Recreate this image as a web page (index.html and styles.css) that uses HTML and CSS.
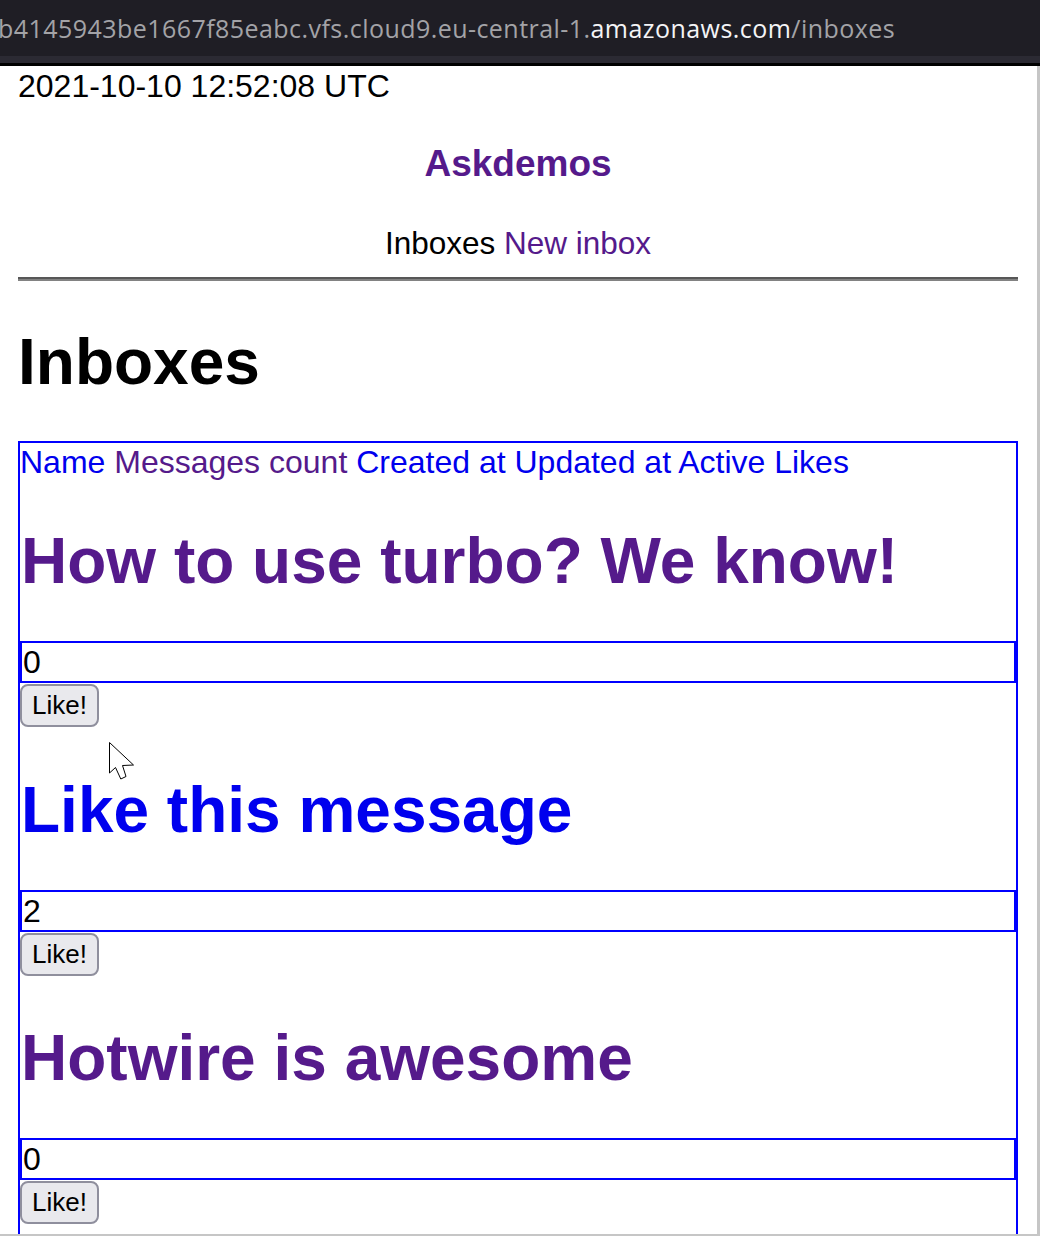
FILE: index.html
```html
<!DOCTYPE html>
<html lang="en">
<head>
<meta charset="utf-8">
<title>Inboxes</title>
<link rel="stylesheet" href="styles.css">
</head>
<body>
<header class="chrome">
  <div class="omnibox"><span class="url-dim">b4145943be1667f85eabc.vfs.cloud9.eu-central-1.</span><span class="url-host">amazonaws.com</span><span class="url-dim">/inboxes</span></div>
</header>
<div class="chrome-strip"></div>
<div class="viewport">
  <main class="page">
    <p class="timestamp">2021-10-10 12:52:08 UTC</p>
    <h3 class="brand"><a class="visited" href="#">Askdemos</a></h3>
    <nav class="nav">Inboxes <a class="visited" href="#">New inbox</a></nav>
    <hr class="rule">
    <h1 class="page-title">Inboxes</h1>
    <section class="inbox-table">
      <div class="table-head"><a class="link" href="#">Name</a> <a class="visited" href="#">Messages count</a> <a class="link" href="#">Created at</a> <a class="link" href="#">Updated at</a> <a class="link" href="#">Active</a> <a class="link" href="#">Likes</a></div>
      <article class="entry">
        <h1 class="entry-title"><a class="visited" href="#">How to use turbo? We know!</a></h1>
        <div class="likes-count">0</div>
        <div class="like-row"><button class="like-btn" type="button">Like!</button></div>
      </article>
      <article class="entry">
        <h1 class="entry-title"><a class="link" href="#">Like this message</a></h1>
        <div class="likes-count">2</div>
        <div class="like-row"><button class="like-btn" type="button">Like!</button></div>
      </article>
      <article class="entry">
        <h1 class="entry-title"><a class="visited" href="#">Hotwire is awesome</a></h1>
        <div class="likes-count">0</div>
        <div class="like-row"><button class="like-btn" type="button">Like!</button></div>
      </article>
    </section>
  </main>
  <svg class="cursor" width="26" height="38" viewBox="0 0 26 38" aria-hidden="true">
    <path d="M0.5 0.5 L0.5 31 L6.5 25.5 L11.8 37 L17 34.5 L13.5 23.5 L24.5 23 Z" fill="#fff" stroke="#000" stroke-width="1" stroke-linejoin="miter"/>
  </svg>
</div>
</body>
</html>
```

FILE: styles.css
```css
* {
  box-sizing: border-box;
}

html, body {
  margin: 0;
  padding: 0;
  background: #ffffff;
}

body {
  width: 1040px;
  height: 1236px;
  overflow: hidden;
  font-family: "Liberation Sans", Arial, sans-serif;
  color: #000;
}

.chrome {
  height: 56px;
  background: #1f1e25;
  overflow: hidden;
  white-space: nowrap;
}

.omnibox {
  margin-left: -2px;
  font-family: "Open Sans", "Noto Sans", sans-serif;
  font-size: 25px;
  line-height: 56px;
  letter-spacing: 0.45px;
}

.url-dim {
  color: #a3a3a7;
}

.url-host {
  color: #f4f4f6;
}

.chrome-strip {
  height: 10px;
  background: #2b2a33;
  border-bottom: 3px solid #000;
}

.viewport {
  position: relative;
  height: 1170px;
  overflow: hidden;
  border-right: 3px solid #c6c6c6;
  border-bottom: 2px solid #c6c6c6;
}

.page {
  padding: 2px 19px 0 18px;
}

a {
  text-decoration: none;
}

.link {
  color: #0000ee;
}

.visited {
  color: #551a8b;
}

.timestamp {
  margin: 0;
  font-size: 32px;
  line-height: normal;
}

.brand {
  margin: 37.5px 0 0;
  font-size: 37px;
  font-weight: bold;
  line-height: normal;
  text-align: center;
}

.nav {
  margin-top: 40.9px;
  font-size: 31.5px;
  line-height: normal;
  text-align: center;
}

.rule {
  height: 0;
  margin: 15px 0 0;
  border: none;
  border-top: 2px solid #575757;
  border-bottom: 2px solid #828282;
}

.page-title {
  margin: 44px 0 42px;
  font-size: 64px;
  font-weight: bold;
  line-height: normal;
}

.inbox-table {
  width: 1000px;
  padding-bottom: 80px;
  border: 2px solid #0000ff;
  border-bottom: none;
  font-size: 32px;
}

.table-head {
  line-height: 38px;
  white-space: nowrap;
}

.entry-title {
  margin: 43px 0;
  padding-left: 1px;
  font-size: 64px;
  font-weight: bold;
  line-height: normal;
}

.likes-count {
  border: 2px solid #0000ff;
  line-height: 38px;
  padding-left: 1px;
}

.like-row {
  height: 46.4px;
  padding-top: 1px;
}

.like-btn {
  display: block;
  width: 79px;
  height: 43px;
  padding: 0;
  font-family: "Liberation Sans", Arial, sans-serif;
  font-size: 26px;
  color: #000;
  background: #e9e9ed;
  border: 2px solid #8f8f9d;
  border-radius: 8px;
}

.cursor {
  position: absolute;
  left: 109px;
  top: 676px;
}
```
